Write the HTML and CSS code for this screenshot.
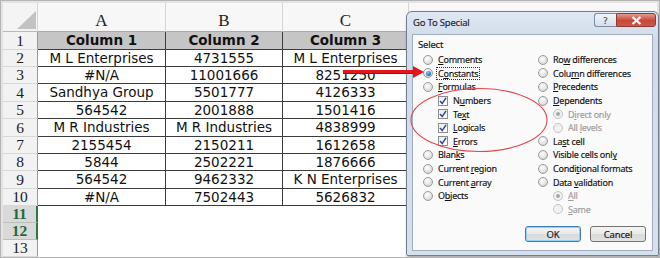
FILE: index.html
```html
<!DOCTYPE html>
<html>
<head>
<meta charset="utf-8">
<link rel="stylesheet" href="styles.css">
</head>
<body>
<div class="frame">
  <div class="sheet">
    <div class="corner"><svg width="35" height="29" viewBox="0 0 35 29"><polygon points="14,26 33,26 33,8" fill="#c2c2c2"/></svg></div>
    <div class="ch">A</div><div class="ch">B</div><div class="ch">C</div><div class="ch ch-last"></div>

    <div class="rh">1</div><div class="c hd">Column 1</div><div class="c hd">Column 2</div><div class="c hd">Column 3</div><div class="rest"></div>
    <div class="rh">2</div><div class="c">M L Enterprises</div><div class="c">4731555</div><div class="c">M L Enterprises</div><div class="rest"></div>
    <div class="rh">3</div><div class="c">#N/A</div><div class="c">11001666</div><div class="c">8251250</div><div class="rest"></div>
    <div class="rh">4</div><div class="c">Sandhya Group</div><div class="c">5501777</div><div class="c">4126333</div><div class="rest"></div>
    <div class="rh">5</div><div class="c">564542</div><div class="c">2001888</div><div class="c">1501416</div><div class="rest"></div>
    <div class="rh">6</div><div class="c">M R Industries</div><div class="c">M R Industries</div><div class="c">4838999</div><div class="rest"></div>
    <div class="rh">7</div><div class="c">2155454</div><div class="c">2150211</div><div class="c">1612658</div><div class="rest"></div>
    <div class="rh">8</div><div class="c">5844</div><div class="c">2502221</div><div class="c">1876666</div><div class="rest"></div>
    <div class="rh">9</div><div class="c">564542</div><div class="c">9462332</div><div class="c">K N Enterprises</div><div class="rest"></div>
    <div class="rh">10</div><div class="c">#N/A</div><div class="c">7502443</div><div class="c">5626832</div><div class="rest"></div>
    <div class="rh sel">11</div><div class="e"></div><div class="e"></div><div class="e"></div><div class="rest"></div>
    <div class="rh sel">12</div><div class="e"></div><div class="e"></div><div class="e"></div><div class="rest"></div>
    <div class="rh">13</div><div class="e"></div><div class="e"></div><div class="e"></div><div class="rest"></div>
  </div>

  <div class="dialog">
    <div class="titlebar">
      <span class="title">Go To Special</span>
      <div class="tbtns">
        <span class="tb help">?</span>
        <span class="tb close"><svg width="11" height="9" viewBox="0 0 11 9"><path d="M1.5 1 L9.5 8 M9.5 1 L1.5 8" stroke="#fff" stroke-width="2.2"/></svg></span>
      </div>
    </div>
    <div class="client">
      <div class="group-label">Select</div>
      <div class="cols">
        <div class="col">
          <div class="opt"><span class="radio"></span><span class="lbl"><u>C</u>omments</span></div>
          <div class="opt"><span class="radio on"></span><span class="lbl focus">C<u>o</u>nstants</span></div>
          <div class="opt"><span class="radio"></span><span class="lbl"><u>F</u>ormulas</span></div>
          <div class="opt sub"><span class="check"><svg width="8" height="8" viewBox="0 0 8 8"><path d="M1 4 L3.2 6.6 L7 0.8" fill="none" stroke="#2c4d94" stroke-width="1.5"/></svg></span><span class="lbl">N<u>u</u>mbers</span></div>
          <div class="opt sub"><span class="check"><svg width="8" height="8" viewBox="0 0 8 8"><path d="M1 4 L3.2 6.6 L7 0.8" fill="none" stroke="#2c4d94" stroke-width="1.5"/></svg></span><span class="lbl">Te<u>x</u>t</span></div>
          <div class="opt sub"><span class="check"><svg width="8" height="8" viewBox="0 0 8 8"><path d="M1 4 L3.2 6.6 L7 0.8" fill="none" stroke="#2c4d94" stroke-width="1.5"/></svg></span><span class="lbl"><u>L</u>ogicals</span></div>
          <div class="opt sub"><span class="check"><svg width="8" height="8" viewBox="0 0 8 8"><path d="M1 4 L3.2 6.6 L7 0.8" fill="none" stroke="#2c4d94" stroke-width="1.5"/></svg></span><span class="lbl"><u>E</u>rrors</span></div>
          <div class="opt"><span class="radio"></span><span class="lbl">Blan<u>k</u>s</span></div>
          <div class="opt"><span class="radio"></span><span class="lbl">Current <u>r</u>egion</span></div>
          <div class="opt"><span class="radio"></span><span class="lbl">Current <u>a</u>rray</span></div>
          <div class="opt"><span class="radio"></span><span class="lbl">O<u>b</u>jects</span></div>
        </div>
        <div class="col">
          <div class="opt"><span class="radio"></span><span class="lbl">Ro<u>w</u> differences</span></div>
          <div class="opt"><span class="radio"></span><span class="lbl">Colu<u>m</u>n differences</span></div>
          <div class="opt"><span class="radio"></span><span class="lbl"><u>P</u>recedents</span></div>
          <div class="opt"><span class="radio"></span><span class="lbl"><u>D</u>ependents</span></div>
          <div class="opt sub dis"><span class="radio dot"></span><span class="lbl">D<u>i</u>rect only</span></div>
          <div class="opt sub dis"><span class="radio"></span><span class="lbl">All <u>l</u>evels</span></div>
          <div class="opt"><span class="radio"></span><span class="lbl">La<u>s</u>t cell</span></div>
          <div class="opt"><span class="radio"></span><span class="lbl">Visible cells onl<u>y</u></span></div>
          <div class="opt"><span class="radio"></span><span class="lbl">Condi<u>t</u>ional formats</span></div>
          <div class="opt"><span class="radio"></span><span class="lbl">Data <u>v</u>alidation</span></div>
          <div class="opt sub dis"><span class="radio dot"></span><span class="lbl"><u>A</u>ll</span></div>
          <div class="opt sub dis"><span class="radio"></span><span class="lbl"><u>S</u>ame</span></div>
        </div>
      </div>
      <div class="buttons">
        <span class="btn default">OK</span>
        <span class="btn">Cancel</span>
      </div>
    </div>
  </div>

  <svg class="ellipse" width="140" height="66" viewBox="0 0 140 66">
    <ellipse cx="70" cy="33" rx="68" ry="31.5" fill="none" stroke="#e2464e" stroke-width="1.1"/>
  </svg>

  <svg class="arrow" width="82" height="14" viewBox="0 0 82 14">
    <rect x="0" y="5" width="72" height="4" fill="#e4161b"/>
    <rect x="0" y="8" width="72" height="1" fill="#a31014"/>
    <polygon points="70,1 81,7 70,13" fill="#e4161b"/>
  </svg>
</div>
</body>
</html>
```

FILE: styles.css
```css
* { box-sizing: border-box; }
html, body { margin: 0; padding: 0; }
body { background: #ffffff; }

.frame {
  position: relative;
  width: 660px;
  height: 258px;
  border: 1px solid #b4b4b4;
  padding: 2px 2px 5px 2px;
  background: #e3e3e3;
  overflow: hidden;
}

.sheet {
  display: grid;
  grid-template-columns: 35px 128px 117px 126px 1fr;
  grid-template-rows: 29px 18px 17px 17px 18px 17px 18px 17px 17px 18px 17px 17px 17px 1fr;
  height: 100%;
  background: #fff;
  border-bottom: 1px solid #8c8c8c;
  font-family: "DejaVu Sans", Verdana, sans-serif;
  font-size: 13.5px;
  color: #111;
}

.corner {
  background: #f4f4f4;
  border-right: 1px solid #d6d6d6;
  border-bottom: 1px solid #b9b9b9;
}
.corner svg { display: block; }

.ch {
  background: #f7f7f7;
  border-right: 1px solid #d4d4d4;
  border-bottom: 1px solid #a9a9a9;
  font-family: "Liberation Serif", "Times New Roman", serif;
  font-size: 17px;
  color: #222;
  display: flex;
  align-items: flex-end;
  justify-content: center;
  padding-bottom: 0;
  line-height: 20px;
}
.ch-last { border-right: none; }

.rh {
  background: #f2f2f2;
  border-right: 1px solid #9a9a9a;
  border-bottom: 1px solid #d8d8d8;
  font-family: "Liberation Serif", "Times New Roman", serif;
  font-size: 15.5px;
  color: #1c1c1c;
  display: flex;
  align-items: center;
  justify-content: center;
  line-height: 1;
}
.rh.sel {
  background: #d9d9d9;
  color: #1d6b3b;
  font-weight: bold;
  border-right: 2px solid #2a7a45;
  border-bottom-color: #bdbdbd;
}

.c {
  border-right: 1px solid #3c3c3c;
  border-bottom: 1px solid #3c3c3c;
  display: flex;
  align-items: center;
  justify-content: center;
  white-space: nowrap;
  line-height: 1;
  padding-top: 1px;
}
.c.hd {
  background: #c5c5c5;
  font-weight: bold;
}
.e { background: #fff; }
.rest { background: #fff; }

.arrow {
  position: absolute;
  left: 342px;
  top: 64px;
}

.ellipse {
  position: absolute;
  left: 408px;
  top: 86px;
}

/* dialog */
.dialog {
  position: absolute;
  left: 405px;
  top: 10px;
  width: 253px;
  height: 245px;
  border: 1px solid #6f7f93;
  border-radius: 6px 6px 2px 2px;
  background: linear-gradient(#dfe8f3, #cfdbe9 30px, #d6e1ee);
  box-shadow: 1px 2px 3px rgba(0,0,0,0.35);
  display: flex;
  flex-direction: column;
  padding: 0 5px 4px 5px;
  font-family: "Noto Sans", "Open Sans", sans-serif;
  color: #111;
  -webkit-text-stroke: 0.15px #111;
}

.titlebar {
  height: 22px;
  flex: none;
  display: flex;
  align-items: flex-start;
  justify-content: space-between;
}
.title {
  font-size: 9.5px;
  letter-spacing: -0.2px;
  margin-top: 4px;
  margin-left: 1px;
  color: #1e2a3a;
}
.tbtns {
  display: flex;
  margin-top: 1px;
  margin-right: -3px;
}
.tb {
  height: 14px;
  display: flex;
  align-items: center;
  justify-content: center;
  border: 1px solid #7d8ea3;
}
.help {
  width: 22px;
  border-radius: 3px 0 0 3px;
  background: linear-gradient(#f1f5fa, #d5dfeb);
  font-size: 9px;
  color: #4a5a70;
  border-right: none;
}
.close {
  width: 40px;
  border-radius: 0 3px 3px 0;
  background: linear-gradient(#e59a8f, #c7473a 55%, #c95a4a);
  border-color: #8d3a33;
}
.close svg { display: block; }

.client {
  flex: 1;
  background: #fafafa;
  border: 1px solid #9fadbf;
  display: flex;
  flex-direction: column;
  padding: 3px 6px 8px 5px;
}

.group-label {
  font-size: 9.5px;
  letter-spacing: -0.2px;
  height: 15px;
  line-height: 13px;
  margin-bottom: 0;
}

.cols {
  display: flex;
  padding-left: 5px;
}
.col {
  display: flex;
  flex-direction: column;
}
.col:first-child { width: 115px; }

.opt {
  height: 13.6px;
  display: flex;
  align-items: center;
  font-size: 9px;
  letter-spacing: -0.25px;
  white-space: nowrap;
}
.opt.sub { padding-left: 15px; }
.opt.dis { color: #9c9c9c; -webkit-text-stroke: 0.15px #9c9c9c; }
.lbl { margin-left: 4px; line-height: 11px; padding: 0 1px; }
.lbl u { text-decoration-thickness: 1px; text-underline-offset: 1px; }
.lbl.focus { outline: 1px dotted #333; outline-offset: 0; }

.radio {
  width: 10px;
  height: 10px;
  border-radius: 50%;
  border: 1px solid #9a9a9a;
  background: radial-gradient(circle at 40% 35%, #ffffff 0%, #e9e9e9 45%, #c9c9c9 100%);
  flex: none;
  display: flex;
  align-items: center;
  justify-content: center;
}
.radio.on::after {
  content: "";
  width: 5px;
  height: 5px;
  border-radius: 50%;
  background: radial-gradient(circle at 40% 35%, #7fd0ff, #1768b8 70%);
}
.dis .radio { border-color: #c4c4c4; background: #f1f1f1; }
.radio.dot::after {
  content: "";
  width: 4px;
  height: 4px;
  border-radius: 50%;
  background: #a8a8a8;
}

.check {
  width: 10px;
  height: 10px;
  border: 1px solid #8c8c8c;
  background: linear-gradient(#ececec, #ffffff);
  flex: none;
  display: flex;
  align-items: center;
  justify-content: center;
}
.check svg { display: block; }

.buttons {
  margin-top: auto;
  display: flex;
  justify-content: flex-end;
  gap: 9px;
}
.btn {
  width: 56px;
  height: 16px;
  border: 1px solid #727272;
  border-radius: 3px;
  background: linear-gradient(#f4f4f4, #e9e9e9 50%, #d9d9d9 51%, #e2e2e2);
  font-size: 9.5px;
  letter-spacing: -0.2px;
  display: flex;
  align-items: center;
  justify-content: center;
  color: #1b1b1b;
}
.btn.default {
  border-color: #3c7fb1;
  box-shadow: inset 0 0 0 1px #8fd0f4;
}
```
